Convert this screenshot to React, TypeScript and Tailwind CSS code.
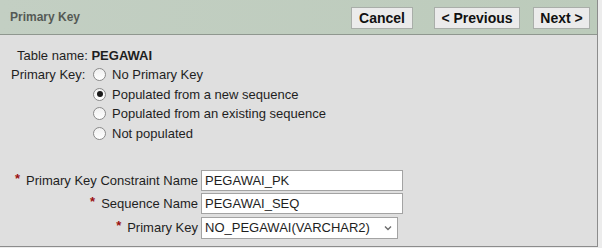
import React from "react";

const radios = [
  { label: "No Primary Key", checked: false },
  { label: "Populated from a new sequence", checked: true },
  { label: "Populated from an existing sequence", checked: false },
  { label: "Not populated", checked: false },
];

function Radio({ checked }: { checked: boolean }) {
  return (
    <span className="flex h-[13px] w-[13px] shrink-0 items-center justify-center rounded-full border border-[#8a8a8a] bg-gradient-to-b from-[#f0f0f0] to-white">
      {checked && <span className="h-[6px] w-[6px] rounded-full bg-[#1a1a1a]" />}
    </span>
  );
}

function Req() {
  return <span className="mr-[6px] relative -top-[2px] text-[13px] font-bold text-[#9b1010]">*</span>;
}

export default function App() {
  return (
    <div className="h-[248px] w-[602px] bg-[#ececec] font-['Liberation_Sans',Arial,sans-serif]">
      <div className="h-[247px] w-[598px] border-r border-b border-[#8c8c8c] bg-[#dfdfdf]">
        {/* Header */}
        <div className="flex h-[35px] items-center justify-between border-b border-[#8f978f] bg-gradient-to-r from-[#c3cfc3] to-[#bccbbb] pl-[10px] pr-[7px]">
          <span className="text-[12px] font-bold text-[#555a55]">Primary Key</span>
          <div className="flex items-center pt-[1px]">
            <button className="h-[22px] w-[62px] border border-[#a9aea9] bg-[#ebebeb] text-[14px] font-bold text-[#111]">
              Cancel
            </button>
            <button className="ml-[21px] h-[22px] w-[86px] border border-[#a9aea9] bg-[#ebebeb] text-[14px] font-bold text-[#111]">
              &lt; Previous
            </button>
            <button className="ml-[13px] h-[22px] w-[57px] border border-[#a9aea9] bg-[#ebebeb] text-[14px] font-bold text-[#111]">
              Next &gt;
            </button>
          </div>
        </div>

        {/* Body */}
        <div className="pt-[11px] text-[13px] text-[#1e1e1e]">
          <div className="pl-[17px] leading-[19px]">
            Table name: <span className="font-bold">PEGAWAI</span>
          </div>
          <div className="flex pl-[11px]">
            <span className="w-[82px] leading-[19.5px]">Primary Key:</span>
            <div className="flex flex-col">
              {radios.map((r) => (
                <label key={r.label} className="flex h-[19.5px] items-center">
                  <Radio checked={r.checked} />
                  <span className="ml-[6px]">{r.label}</span>
                </label>
              ))}
            </div>
          </div>

          <div className="mt-[27px] grid grid-cols-[198px_auto] items-center gap-x-[3px] gap-y-[2px]">
            <div className="text-right">
              <Req />
              Primary Key Constraint Name
            </div>
            <div className="flex h-[21px] w-[202px] items-center border border-[#a3a3a3] bg-white pl-[3px]">
              PEGAWAI_PK
            </div>
            <div className="text-right">
              <Req />
              Sequence Name
            </div>
            <div className="flex h-[21px] w-[202px] items-center border border-[#a3a3a3] bg-white pl-[3px]">
              PEGAWAI_SEQ
            </div>
            <div className="text-right">
              <Req />
              Primary Key
            </div>
            <div className="mt-[1px] flex h-[22px] w-[197px] items-center justify-between border border-[#a3a3a3] bg-white pl-[3px] pr-[5px]">
              <span>NO_PEGAWAI(VARCHAR2)</span>
              <svg width="8" height="6" viewBox="0 0 8 6" fill="none">
                <path d="M1 1.5 L4 4.5 L7 1.5" stroke="#6b6b6b" strokeWidth="1.4" />
              </svg>
            </div>
          </div>
        </div>
      </div>
    </div>
  );
}
